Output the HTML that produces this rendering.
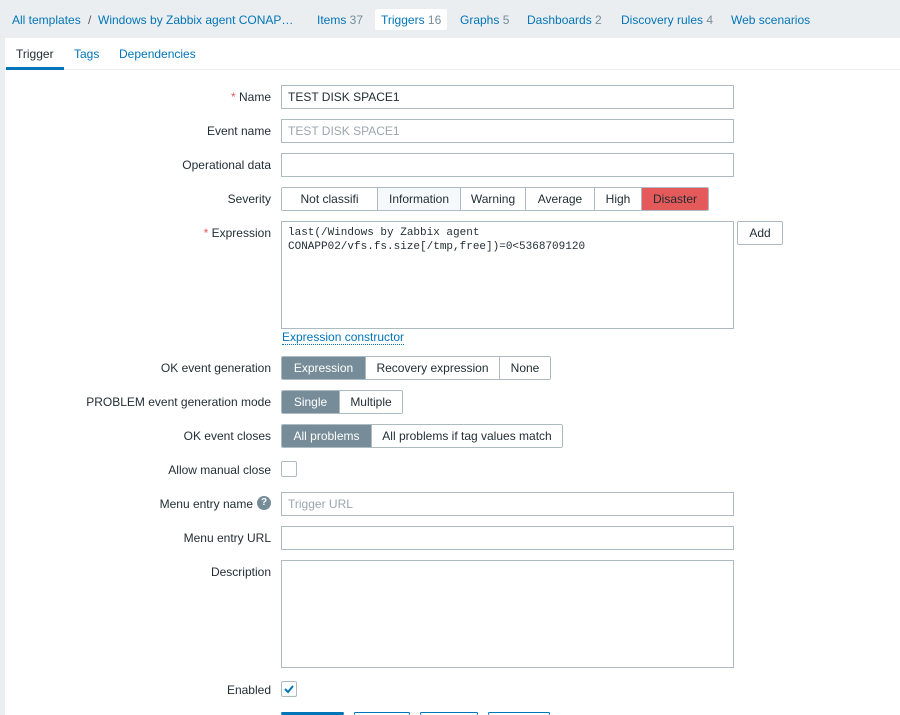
<!DOCTYPE html>
<html><head><meta charset="utf-8"><style>
*{box-sizing:border-box}
html{height:715px;overflow:hidden}
body{margin:0;width:900px;height:715px;overflow:hidden;background:#ebeef0;font-family:"Liberation Sans",Arial,sans-serif;font-size:12px;color:#1f2c33;position:relative}
.a{position:absolute}
.lnk{color:#0275b8}
.cnt{color:#768d99}
.panel{position:absolute;left:5px;top:38px;width:895px;height:677px;background:#fff}
.lbl{position:absolute;right:629px;line-height:24px;white-space:nowrap}
.inp{position:absolute;left:281px;width:453px;height:24px;border:1px solid #acbbc2;padding:0 6px;line-height:22px;background:#fff}
.seg{position:absolute;left:281px;height:24px;display:flex;border:1px solid #acbbc2;border-radius:2px;overflow:hidden}
.seg div{height:22px;line-height:22px;text-align:center;border-left:1px solid #acbbc2;background:#fff}
.seg div:first-child{border-left:none}
.seg .on{background:#768d99;color:#fff;border-color:#768d99}
.cb{position:absolute;left:281px;width:16px;height:16px;border:1px solid #acbbc2;border-radius:2px;background:#fff}
.req{color:#e45959}
.btn{position:absolute;top:712px;height:24px;border:1px solid #0275b8;border-radius:2px;background:#fff}
</style></head><body>
<div class="a lnk" style="left:12px;top:13px">All templates</div>
<div class="a" style="left:88px;top:13px;color:#555">/</div>
<div class="a lnk" style="left:98px;top:13px">Windows by Zabbix agent CONAP…</div>
<div class="a lnk" style="left:317px;top:13px">Items <span class="cnt">37</span></div>
<div class="a" style="left:375px;top:9px;width:72px;height:21px;background:#fff;border-radius:2px"></div>
<div class="a lnk" style="left:381px;top:13px">Triggers <span class="cnt">16</span></div>
<div class="a lnk" style="left:460px;top:13px">Graphs <span class="cnt">5</span></div>
<div class="a lnk" style="left:527px;top:13px">Dashboards <span class="cnt">2</span></div>
<div class="a lnk" style="left:621px;top:13px">Discovery rules <span class="cnt">4</span></div>
<div class="a lnk" style="left:731px;top:13px">Web scenarios</div>
<div class="panel"></div>
<div class="a" style="left:5px;top:69px;width:895px;height:1px;background:#ebeef0"></div>
<div class="a" style="left:16px;top:47px">Trigger</div>
<div class="a" style="left:6px;top:67px;width:58px;height:3px;background:#0275b8"></div>
<div class="a lnk" style="left:74px;top:47px">Tags</div>
<div class="a lnk" style="left:119px;top:47px">Dependencies</div>

<div class="lbl" style="top:85px"><span class="req">*</span> Name</div>
<div class="inp" style="top:85px">TEST DISK SPACE1</div>
<div class="lbl" style="top:119px">Event name</div>
<div class="inp" style="top:119px;color:#9aa6ad">TEST DISK SPACE1</div>
<div class="lbl" style="top:153px">Operational data</div>
<div class="inp" style="top:153px"></div>
<div class="lbl" style="top:187px">Severity</div>
<div class="seg" style="top:187px"><div style="width:95px">Not classifi</div><div style="width:83px;background:#f6f9fb">Information</div><div style="width:65px">Warning</div><div style="width:69px">Average</div><div style="width:47px">High</div><div style="width:67px;background:#e45959;border-color:#acbbc2">Disaster</div></div>
<div class="lbl" style="top:221px"><span class="req">*</span> Expression</div>
<div class="inp" style="top:221px;height:108px;font-family:'Liberation Mono',monospace;font-size:11px;line-height:14px;padding-top:4px">last(/Windows by Zabbix agent<br>CONAPP02/vfs.fs.size[/tmp,free])=0&lt;5368709120</div>
<div class="a" style="left:737px;top:221px;width:46px;height:24px;border:1px solid #acbbc2;border-radius:2px;text-align:center;line-height:22px">Add</div>
<div class="a lnk" style="left:282px;top:330px;border-bottom:1px dotted #0275b8;line-height:14px">Expression constructor</div>
<div class="lbl" style="top:356px">OK event generation</div>
<div class="seg" style="top:356px"><div class="on" style="width:83px">Expression</div><div style="width:134px">Recovery expression</div><div style="width:51px">None</div></div>
<div class="lbl" style="top:390px">PROBLEM event generation mode</div>
<div class="seg" style="top:390px"><div class="on" style="width:57px">Single</div><div style="width:63px">Multiple</div></div>
<div class="lbl" style="top:424px">OK event closes</div>
<div class="seg" style="top:424px"><div class="on" style="width:89px">All problems</div><div style="width:191px">All problems if tag values match</div></div>
<div class="lbl" style="top:458px">Allow manual close</div>
<div class="cb" style="top:461px"></div>
<div class="lbl" style="top:492px;right:647px">Menu entry name</div>
<div class="a" style="left:257px;top:496px;width:14px;height:14px;border-radius:50%;background:#768d99;color:#fff;font-size:10px;font-weight:bold;text-align:center;line-height:14px">?</div>
<div class="inp" style="top:492px;color:#9aa6ad">Trigger URL</div>
<div class="lbl" style="top:526px">Menu entry URL</div>
<div class="inp" style="top:526px"></div>
<div class="lbl" style="top:560px">Description</div>
<div class="inp" style="top:560px;height:108px"></div>
<div class="lbl" style="top:678px">Enabled</div>
<div class="cb" style="top:681px"><svg width="14" height="14" viewBox="0 0 14 14"><path d="M3 7l3 3 5-6" stroke="#0275b8" stroke-width="2" fill="none"/></svg></div>
<div class="btn" style="left:281px;width:63px;height:3px;background:#0275b8"></div>
<div class="btn" style="left:354px;width:56px;height:3px;border-bottom:none"></div>
<div class="btn" style="left:420px;width:58px;height:3px;border-bottom:none"></div>
<div class="btn" style="left:488px;width:62px;height:3px;border-bottom:none"></div>
</body></html>
